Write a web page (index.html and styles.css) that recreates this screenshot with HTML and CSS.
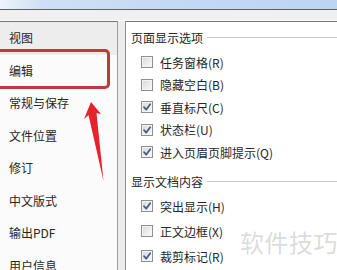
FILE: index.html
```html
<!DOCTYPE html>
<html lang="zh-CN">
<head>
<meta charset="utf-8">
<link rel="stylesheet" href="styles.css">
</head>
<body>
<div class="screen">
  <div class="titlebar"></div>
  <div class="toolbar"></div>
  <div class="main">
    <nav class="side">
      <div class="item active">视图</div>
      <div class="item">编辑</div>
      <div class="item">常规与保存</div>
      <div class="item">文件位置</div>
      <div class="item">修订</div>
      <div class="item">中文版式</div>
      <div class="item">输出PDF</div>
      <div class="item">用户信息</div>
    </nav>
    <div class="gap"></div>
    <section class="panel">
      <div class="group-title g1"><span>页面显示选项</span><i class="rule"></i></div>
      <div class="rows r1">
        <div class="row"><span class="cb"></span><span>任务窗格(R)</span></div>
        <div class="row"><span class="cb"></span><span>隐藏空白(B)</span></div>
        <div class="row"><span class="cb on"><svg viewBox="0 0 10 10"><path d="M2 5.2 L4.2 7.6 L8.2 2.2" /></svg></span><span>垂直标尺(C)</span></div>
        <div class="row"><span class="cb on"><svg viewBox="0 0 10 10"><path d="M2 5.2 L4.2 7.6 L8.2 2.2" /></svg></span><span>状态栏(U)</span></div>
        <div class="row"><span class="cb on"><svg viewBox="0 0 10 10"><path d="M2 5.2 L4.2 7.6 L8.2 2.2" /></svg></span><span>进入页眉页脚提示(Q)</span></div>
      </div>
      <div class="group-title g2"><span>显示文档内容</span><i class="rule"></i></div>
      <div class="rows r2">
        <div class="row"><span class="cb on"><svg viewBox="0 0 10 10"><path d="M2 5.2 L4.2 7.6 L8.2 2.2" /></svg></span><span>突出显示(H)</span></div>
        <div class="row"><span class="cb"></span><span>正文边框(X)</span></div>
        <div class="row"><span class="cb on"><svg viewBox="0 0 10 10"><path d="M2 5.2 L4.2 7.6 L8.2 2.2" /></svg></span><span>裁剪标记(R)</span></div>
      </div>
    </section>
  </div>
  <div class="highlight"></div>
  <svg class="arrow" width="337" height="270" viewBox="0 0 337 270">
    <polygon points="91,102 101,114 96.5,113 103.5,181 88.5,115 84,119" fill="#e4232a"/>
  </svg>
  <div class="watermark">软件技巧</div>
</div>
</body>
</html>
```
FILE: styles.css
```css
* { box-sizing: border-box; }
html, body { margin: 0; padding: 0; }
body {
  width: 337px;
  height: 270px;
  overflow: hidden;
  background: #f0f0f0;
  font-family: "Noto Sans CJK SC", "Noto Sans", sans-serif;
  font-size: 12px;
  color: #262626;
}
.screen {
  position: relative;
  width: 337px;
  height: 270px;
  overflow: hidden;
}
.titlebar {
  height: 10px;
  background: linear-gradient(90deg, #eef4fb 0%, #cfe0f4 12%, #c4daf3 50%, #bcd5f1 100%);
  border-bottom: 1px solid #5d6168;
}
.toolbar {
  height: 11px;
  background: #f0f0f0;
  border-bottom: 1px solid #fafafa;
}
.main {
  display: flex;
  height: 249px;
}
.side {
  width: 118px;
  background: #fbfbfb;
  border-top: 1px solid #777;
  border-right: 1px solid #9c9c9c;
}
.item {
  height: 32.5px;
  line-height: 32.5px;
  padding-left: 9px;
  white-space: nowrap;
}
.item.active {
  background: #ededed;
}
.gap {
  width: 7px;
  background: #ececec;
}
.panel {
  flex: 1;
  background: #fff;
  border-top: 1px solid #777;
  border-left: 1px solid #8c8c8c;
  padding-left: 5px;
}
.group-title {
  display: flex;
  align-items: center;
  height: 18px;
  white-space: nowrap;
}
.group-title.g1 { margin-top: 6px; }
.group-title.g2 { margin-top: 9px; }
.rule {
  flex: 1;
  height: 1px;
  background: #c9c9c9;
  margin-left: 4px;
}
.rows { padding-left: 10px; }
.r1 { margin-top: 4.75px; }
.r1 .row { height: 22.5px; }
.r2 { margin-top: 3.5px; }
.r2 .row { height: 25px; }
.row {
  display: flex;
  align-items: center;
  gap: 7px;
  white-space: nowrap;
}
.cb {
  position: relative;
  width: 12px;
  height: 12px;
  flex: none;
  border: 1px solid #8e8f8f;
  background: linear-gradient(135deg, #d6d6d6 0%, #eeeeee 60%, #fafafa 100%);
  box-shadow: inset 0 0 0 1px #f4f4f4;
}
.cb svg {
  position: absolute;
  left: 0;
  top: 0;
  width: 10px;
  height: 10px;
}
.cb svg path {
  fill: none;
  stroke: #4a5f86;
  stroke-width: 1.8;
  stroke-linecap: round;
  stroke-linejoin: round;
}
.highlight {
  position: absolute;
  left: -5px;
  top: 49px;
  width: 115px;
  height: 40px;
  border: 3px solid #c2383c;
  border-radius: 5px;
}
.arrow {
  position: absolute;
  left: 0;
  top: 0;
  pointer-events: none;
}
.watermark {
  position: absolute;
  left: 240px;
  top: 226px;
  font-size: 24px;
  line-height: 32px;
  color: rgba(175, 175, 175, 0.45);
  white-space: nowrap;
  letter-spacing: 0.5px;
}
```
